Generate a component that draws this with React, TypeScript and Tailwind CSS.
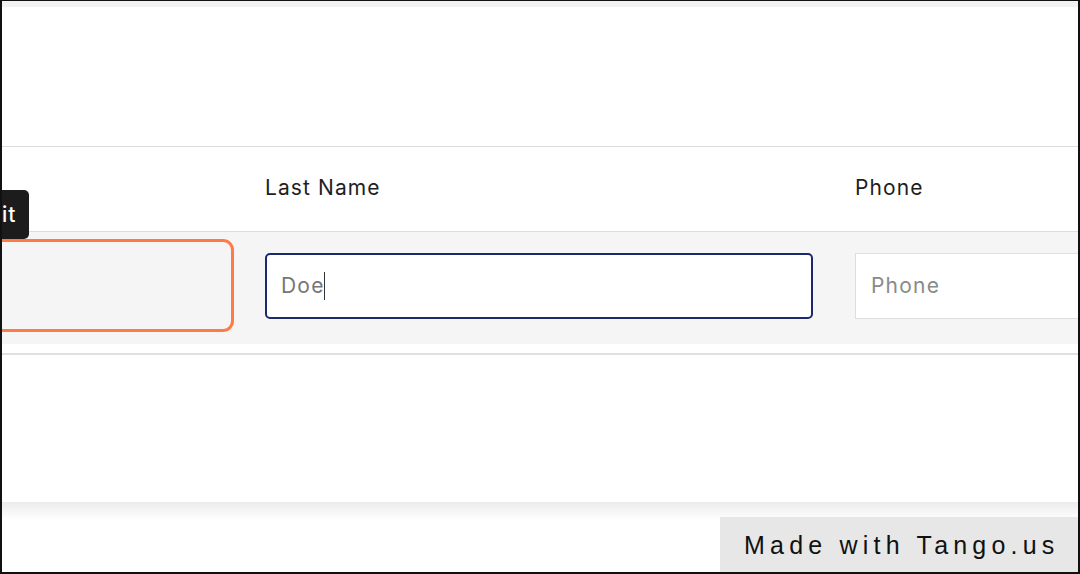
import React from "react";

export default function App() {
  const font = { fontFamily: "Inter, 'Noto Sans', sans-serif" };
  return (
    <div className="relative box-border w-[1080px] h-[574px] overflow-hidden bg-white border-t border-l-2 border-r-2 border-b-2 border-[#111111]">
      <div className="flex flex-col" style={font}>
        <div className="h-[6px] bg-[#f2f2f2]" />
        <div className="h-[139px] bg-white" />
        <div className="h-px bg-[#dcdcdc]" />
        {/* header row */}
        <div className="flex h-[84px] items-center text-[21px] text-[#1e1e1e] tracking-[1.1px]">
          <div className="w-[242px] shrink-0" />
          <div className="w-[590px] shrink-0 px-[21px] pb-[3px]">Last Name</div>
          <div className="flex-1 pl-[21px] pb-[3px]">Phone</div>
        </div>
        <div className="h-px bg-[#dcdcdc]" />
        {/* input row */}
        <div className="flex h-[112px] items-start bg-[#f5f5f5]">
          <div className="flex w-[242px] shrink-0 justify-end pr-[10px] pt-[7px]">
            <div className="h-[93px] w-[280px] shrink-0 rounded-[11px] border-[3px] border-[#ff7a45] bg-[#f5f5f5]" />
          </div>
          <div className="w-[590px] shrink-0 px-[21px] pt-[21px]">
            <div className="flex h-[66px] items-center rounded-[5px] border-2 border-[#1b2a6e] bg-white pl-[14px] text-[21px] text-[#767676] tracking-[1.2px]">
              <span>Doe</span>
              <span className="ml-[-1px] h-[28px] w-[1.5px] bg-[#333333]" />
            </div>
          </div>
          <div className="flex-1 pl-[21px] pt-[21px]">
            <div className="flex h-[66px] w-[320px] items-center border border-[#dedede] bg-white pl-[15px] text-[21px] text-[#8a8a8a] tracking-[1.2px]">
              Phone
            </div>
          </div>
        </div>
        <div className="h-[9px] bg-white" />
        <div className="h-[2px] bg-[#e0e0e0]" />
        <div className="h-[147px] bg-white" />
        <div className="h-[18px] bg-gradient-to-b from-[#ebebeb] to-white" />
      </div>

      {/* tooltip */}
      <div
        className="absolute left-0 top-[189px] flex h-[49px] w-[27px] items-center overflow-hidden rounded-r-[5px] bg-[#1c1c1c] text-[21px] font-medium text-white tracking-[1px]"
        style={font}
      >
        <span className="whitespace-nowrap">it</span>
      </div>

      {/* badge */}
      <div
        className="absolute bottom-0 right-0 flex h-[55px] w-[358px] items-center bg-[#e7e7e7] pl-[24px] pt-[3px] text-[25px] text-[#111111] tracking-[5.2px]"
        style={{ fontFamily: "'Liberation Sans', Arial, sans-serif" }}
      >
        Made with Tango.us
      </div>
    </div>
  );
}
